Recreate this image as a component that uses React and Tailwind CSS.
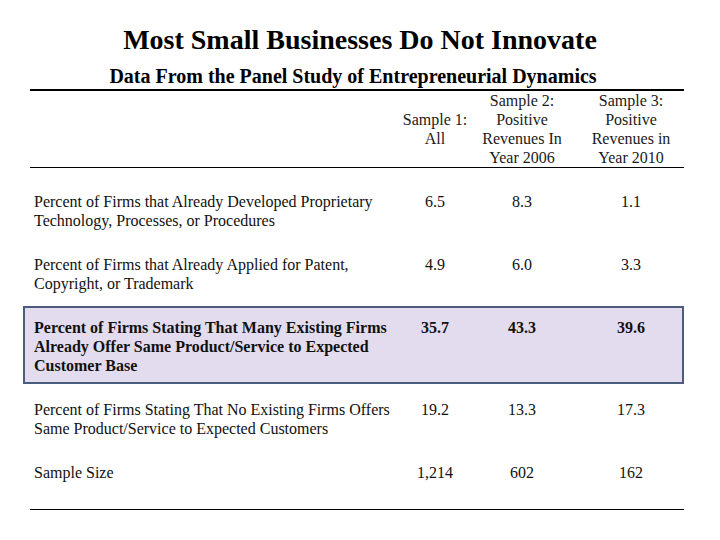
export default function App() {
  const serif = { fontFamily: '"Liberation Serif", "Times New Roman", serif' }

  const rows = [
    { label: ['Percent of Firms that Already Developed Proprietary', 'Technology, Processes, or Procedures'], vals: ['6.5', '8.3', '1.1'], mt: 'mt-[24px]' },
    { label: ['Percent of Firms that Already Applied for Patent,', 'Copyright, or Trademark'], vals: ['4.9', '6.0', '3.3'], mt: 'mt-[25px]' },
  ]
  const rowsAfter = [
    { label: ['Percent of Firms Stating That No Existing Firms Offers', 'Same Product/Service to Expected Customers'], vals: ['19.2', '13.3', '17.3'], mt: 'mt-[16px]' },
    { label: ['Sample Size'], vals: ['1,214', '602', '162'], mt: 'mt-[25px]' },
  ]

  const Row = ({ r, bold }) => (
    <div className={`grid grid-cols-[370px_70px_104px_110px] text-[16px] leading-[19px] text-[#111] ${bold ? 'font-bold' : ''}`}>
      <div className="pl-[4px] whitespace-nowrap">
        {r.label.map((l, i) => <div key={i}>{l}</div>)}
      </div>
      <div className="flex justify-center whitespace-nowrap">{r.vals[0]}</div>
      <div className="flex justify-center whitespace-nowrap">{r.vals[1]}</div>
      <div className="flex justify-center whitespace-nowrap pl-[4px]">{r.vals[2]}</div>
    </div>
  )

  return (
    <div className="w-[720px] h-[540px] bg-white overflow-hidden" style={serif}>
      <div className="pt-[24px] text-center font-bold text-[28px] leading-[31px] text-black">
        Most Small Businesses Do Not Innovate
      </div>
      <div className="mt-[9px] pr-[14px] text-center font-bold text-[20px] leading-[24px] text-black">
        Data From the Panel Study of Entrepreneurial Dynamics
      </div>

      <div className="ml-[30px] w-[654px] mt-[1px]">
        {/* header */}
        <div className="grid grid-cols-[370px_70px_104px_110px] border-t-2 border-b border-black text-[16px] leading-[19px] text-[#1a1a1a]">
          <div />
          <div className="flex flex-col items-center justify-center whitespace-nowrap">
            <div>Sample 1:</div>
            <div>All</div>
          </div>
          <div className="flex flex-col items-center justify-center whitespace-nowrap">
            <div>Sample 2:</div>
            <div>Positive</div>
            <div>Revenues In</div>
            <div>Year 2006</div>
          </div>
          <div className="flex flex-col items-center justify-center whitespace-nowrap pl-[4px]">
            <div>Sample 3:</div>
            <div>Positive</div>
            <div>Revenues in</div>
            <div>Year 2010</div>
          </div>
        </div>

        {rows.map((r, i) => (
          <div key={i} className={r.mt}>
            <Row r={r} />
          </div>
        ))}

        {/* highlighted row */}
        <div className="mt-[13px] -ml-[7px] w-[661px] border-2 border-[#4c5c7c] bg-[#e3dcee] pl-[5px] pt-[10px] pb-[7px]">
          <Row
            bold
            r={{
              label: ['Percent of Firms Stating That Many Existing Firms', 'Already Offer Same Product/Service to Expected', 'Customer Base'],
              vals: ['35.7', '43.3', '39.6'],
            }}
          />
        </div>

        {rowsAfter.map((r, i) => (
          <div key={i} className={r.mt}>
            <Row r={r} />
          </div>
        ))}

        <div className="mt-[27px] border-t-[1.5px] border-black" />
      </div>
    </div>
  )
}
